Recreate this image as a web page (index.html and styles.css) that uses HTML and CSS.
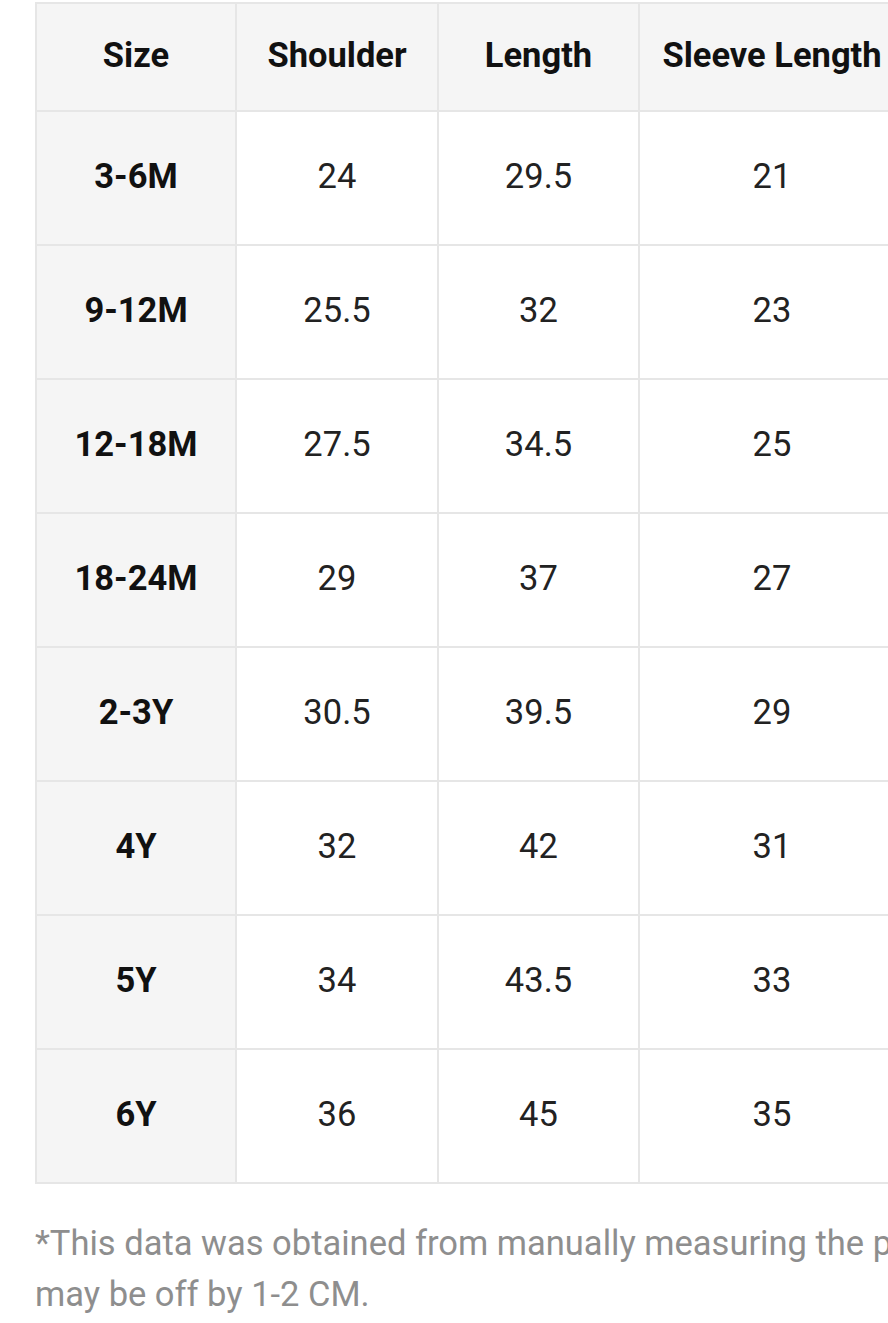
FILE: index.html
```html
<!DOCTYPE html>
<html lang="en">
<head>
<meta charset="utf-8">
<title>Size Chart</title>
<link rel="stylesheet" href="styles.css">
</head>
<body>
<div class="page">
  <table class="chart">
    <colgroup>
      <col class="c1"><col class="c2"><col class="c3"><col class="c4">
    </colgroup>
    <thead>
      <tr class="head"><th>Size</th><th>Shoulder</th><th>Length</th><th>Sleeve Length</th></tr>
    </thead>
    <tbody>
      <tr><th>3-6M</th><td>24</td><td>29.5</td><td>21</td></tr>
      <tr><th>9-12M</th><td>25.5</td><td>32</td><td>23</td></tr>
      <tr><th>12-18M</th><td>27.5</td><td>34.5</td><td>25</td></tr>
      <tr><th>18-24M</th><td>29</td><td>37</td><td>27</td></tr>
      <tr><th>2-3Y</th><td>30.5</td><td>39.5</td><td>29</td></tr>
      <tr><th>4Y</th><td>32</td><td>42</td><td>31</td></tr>
      <tr><th>5Y</th><td>34</td><td>43.5</td><td>33</td></tr>
      <tr><th>6Y</th><td>36</td><td>45</td><td>35</td></tr>
    </tbody>
  </table>
  <p class="note">*This data was obtained from manually measuring the product, and it<br>may be off by 1-2 CM.</p>
</div>
</body>
</html>
```
FILE: styles.css
```css
html, body {
  margin: 0;
  padding: 0;
  overflow: hidden;
  background: #ffffff;
}
.page {
  padding: 2px 0 0 35px;
  font-family: Roboto, "Liberation Sans", sans-serif;
  width: 1300px;
}
.chart {
  border-collapse: collapse;
  table-layout: fixed;
  width: 869px;
}
.c1 { width: 200px; }
.c2 { width: 202px; }
.c3 { width: 201px; }
.c4 { width: 266px; }
.chart th, .chart td {
  border: 2px solid #e6e6e6;
  text-align: center;
  padding: 0 0 4px;
  font-size: 34.5px;
}
.chart th {
  font-weight: 700;
  background: #f5f5f5;
  color: #111111;
}
.chart td {
  font-weight: 400;
  background: #ffffff;
  color: #222222;
}
.chart tr { height: 134px; }
.chart tr.head { height: 108px; }
.note {
  margin: 34px 0 0;
  font-size: 34.5px;
  line-height: 51px;
  color: #8e8e8e;
  white-space: nowrap;
}
```
